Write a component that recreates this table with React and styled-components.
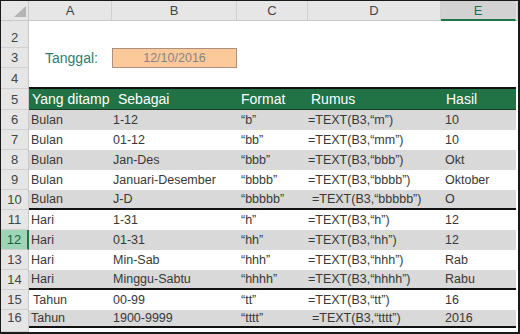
import React from 'react';
import styled, { createGlobalStyle } from 'styled-components';

const GlobalStyle = createGlobalStyle`
  html, body {
    margin: 0;
    padding: 0;
    background: #fff;
  }
  body {
    font-family: "Liberation Sans", Arial, sans-serif;
  }
`;

// row number | A | B | C | D | E | edge
const COLS = '28px 83px 125px 71px 133px 75px 2px';

const Frame = styled.div`
  width: 520px;
  height: 334px;
  box-sizing: border-box;
  border: solid #1a1a1a;
  border-width: 1px 2px 2px 1px;
  overflow: hidden;
  background: #fff;
  display: flex;
  flex-direction: column;
`;

const Row = styled.div`
  display: grid;
  grid-template-columns: ${COLS};
  height: ${p => p.$h}px;
  flex: none;
`;

const Corner = styled.div`
  background: #e6e6e6;
  border-right: 1px solid #c8c8c8;
  border-bottom: 1px solid #c8c8c8;
  box-sizing: border-box;
  display: flex;
  align-items: flex-end;
  justify-content: flex-end;
  padding: 0 2px 3px 0;
`;

const ColHead = styled.div`
  background: ${p => (p.$active ? '#d2d2d2' : '#e6e6e6')};
  border-right: 1px solid #d0d0d0;
  border-bottom: ${p => (p.$active ? '2px solid #217346' : '1px solid #c8c8c8')};
  box-sizing: border-box;
  color: ${p => (p.$active ? '#217346' : '#444')};
  font-size: 13px;
  display: flex;
  align-items: center;
  justify-content: center;
`;

const RowNum = styled.div`
  background: ${p => (p.$active ? '#9fd5b7' : '#e6e6e6')};
  border-right: ${p => (p.$active ? '2px solid #217346' : '1px solid #c8c8c8')};
  border-bottom: 1px solid #d0d0d0;
  box-sizing: border-box;
  color: ${p => (p.$active ? '#1e5e3a' : '#444')};
  font-size: 13px;
  display: flex;
  align-items: flex-end;
  justify-content: center;
  padding-bottom: 2px;
`;

const tones = {
  white: '#ffffff',
  gray: '#d9d9d9',
  green: '#217346',
};

const Cell = styled.div`
  background: ${p => tones[p.$tone || 'white']};
  border-bottom: ${p =>
    p.$rule === 'thick' ? '2px solid #111' : p.$rule === 'dark' ? '1px solid #1e3b2a' : 'none'};
  box-sizing: border-box;
  color: ${p => (p.$tone === 'green' ? '#fff' : '#383838')};
  font-size: ${p => (p.$tone === 'green' ? '14px' : '12.5px')};
  padding-left: ${p => p.$pad || 0}px;
  white-space: nowrap;
  display: flex;
  align-items: center;
`;

const Label = styled(Cell)`
  color: #2f7d6d;
  font-size: 14px;
  padding-left: 16px;
`;

const DateBox = styled.div`
  background: #fbc99a;
  border: 1px solid #a8917e;
  box-sizing: border-box;
  color: #858585;
  font-size: 12.5px;
  display: flex;
  align-items: center;
  justify-content: center;
`;

const Filler = styled.div`
  flex: 1;
  display: grid;
  grid-template-columns: ${COLS};
`;

const PAD = [2, 1, 4, 0, 4];

const data = [
  [6, 'gray', ['Bulan', '1-12', '“b”', '=TEXT(B3,“m”)', '10']],
  [7, 'white', ['Bulan', '01-12', '“bb”', '=TEXT(B3,“mm”)', '10']],
  [8, 'gray', ['Bulan', 'Jan-Des', '“bbb”', '=TEXT(B3,“bbb”)', 'Okt']],
  [9, 'white', ['Bulan', 'Januari-Desember', '“bbbb”', '=TEXT(B3,“bbbb”)', 'Oktober']],
  [10, 'gray', ['Bulan', 'J-D', '“bbbbb”', '=TEXT(B3,“bbbbb”)', 'O'], 'thick', 20, [2, 1, 4, 4, 4]],
  [11, 'white', ['Hari', '1-31', '“h”', '=TEXT(B3,“h”)', '12']],
  [12, 'gray', ['Hari', '01-31', '“hh”', '=TEXT(B3,“hh”)', '12']],
  [13, 'white', ['Hari', 'Min-Sab', '“hhh”', '=TEXT(B3,“hhh”)', 'Rab']],
  [14, 'gray', ['Hari', 'Minggu-Sabtu', '“hhhh”', '=TEXT(B3,“hhhh”)', 'Rabu'], 'thick'],
  [15, 'white', ['Tahun', '00-99', '“tt”', '=TEXT(B3,“tt”)', '16'], null, 20, [4, 1, 4, 0, 4]],
  [16, 'gray', ['Tahun', '1900-9999', '“tttt”', '=TEXT(B3,“tttt”)', '2016'], 'thick', 16, [2, 1, 4, 4, 4]],
];

function Triangle() {
  return (
    <svg width="12" height="11" viewBox="0 0 12 11">
      <polygon points="12,0 12,11 0,11" fill="#b4b4b4" />
    </svg>
  );
}

function Blank({ tone, rule, span = 6 }) {
  return Array.from({ length: span }, (_, i) => <Cell key={i} $tone={tone} $rule={rule} />);
}

export default function App() {
  return (
    <>
      <GlobalStyle />
      <Frame>
        <Row $h={20}>
          <Corner>
            <Triangle />
          </Corner>
          {['A', 'B', 'C', 'D', 'E'].map(c => (
            <ColHead key={c} $active={c === 'E'}>
              {c}
            </ColHead>
          ))}
          <ColHead />
        </Row>

        <Row $h={27}>
          <RowNum>2</RowNum>
          <Blank />
        </Row>

        <Row $h={20}>
          <RowNum>3</RowNum>
          <Label>Tanggal:</Label>
          <DateBox>12/10/2016</DateBox>
          <Blank span={4} />
        </Row>

        <Row $h={21}>
          <RowNum>4</RowNum>
          <Blank rule="thick" span={5} />
          <Cell />
        </Row>

        <Row $h={21}>
          <RowNum>5</RowNum>
          <Cell $tone="green" $rule="dark" $pad={3}>Yang ditamp</Cell>
          <Cell $tone="green" $rule="dark" $pad={6}>Sebagai</Cell>
          <Cell $tone="green" $rule="dark" $pad={4}>Format</Cell>
          <Cell $tone="green" $rule="dark" $pad={3}>Rumus</Cell>
          <Cell $tone="green" $rule="dark" $pad={5}>Hasil</Cell>
          <Cell />
        </Row>

        {data.map(([n, tone, cells, rule, h = 20, pad = PAD]) => (
          <Row key={n} $h={h}>
            <RowNum $active={n === 12}>{n}</RowNum>
            {cells.map((text, i) => (
              <Cell key={i} $tone={tone} $rule={rule} $pad={pad[i]}>
                {text}
              </Cell>
            ))}
            <Cell />
          </Row>
        ))}

        <Filler>
          <RowNum />
        </Filler>
      </Frame>
    </>
  );
}
